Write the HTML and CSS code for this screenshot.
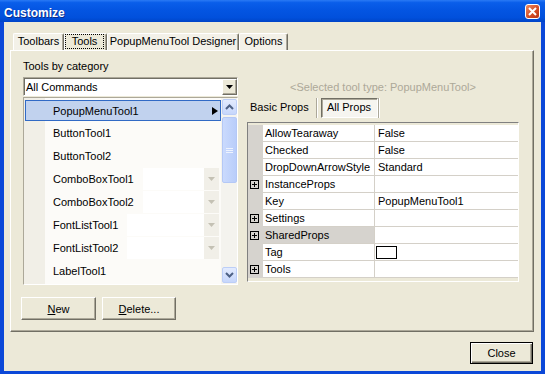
FILE: index.html
```html
<!DOCTYPE html>
<html>
<head>
    <title>Customize</title>
    <link rel="stylesheet" href="styles.css">
</head>
<body>
    <div class="window">
        <div class="titlebar">
            <span class="title">Customize</span>
            <span class="close-x">
                <svg width="9" height="9" viewBox="0 0 9 9"><path d="M1 1L8 8M8 1L1 8" stroke="#fff" stroke-width="2"/></svg>
            </span>
        </div>

        <div class="client">
            <div class="tabs">
                <div class="tab tab-toolbars">Toolbars</div>
                <div class="tab tab-tools active"><span class="focus">Tools</span></div>
                <div class="tab tab-designer">PopupMenuTool Designer</div>
                <div class="tab tab-options">Options</div>
            </div>

            <div class="panel">
                <!-- left: tool list -->
                <div class="left">
                    <div class="field-label">Tools by category</div>
                    <div class="combo">
                        <span class="combo-text">All Commands</span>
                        <span class="combo-btn">
                            <svg width="7" height="4" viewBox="0 0 7 4"><path d="M0 0H7L3.5 4Z" fill="#000"/></svg>
                        </span>
                    </div>

                    <div class="list">
                        <div class="list-items">
                            <div class="tool selected">
                                <span class="tool-name">PopupMenuTool1</span>
                                <svg class="submenu" width="6" height="8" viewBox="0 0 6 8"><path d="M0 0L6 4L0 8Z" fill="#000"/></svg>
                            </div>
                            <div class="tool"><span class="tool-name">ButtonTool1</span></div>
                            <div class="tool"><span class="tool-name">ButtonTool2</span></div>
                            <div class="tool">
                                <span class="tool-name">ComboBoxTool1</span>
                                <span class="tool-combo"><span class="tool-drop"><svg width="7" height="4" viewBox="0 0 7 4"><path d="M0 0H7L3.5 4Z" fill="#c4c1b4"/></svg></span></span>
                            </div>
                            <div class="tool">
                                <span class="tool-name">ComboBoxTool2</span>
                                <span class="tool-combo"><span class="tool-drop"><svg width="7" height="4" viewBox="0 0 7 4"><path d="M0 0H7L3.5 4Z" fill="#c4c1b4"/></svg></span></span>
                            </div>
                            <div class="tool">
                                <span class="tool-name">FontListTool1</span>
                                <span class="tool-combo"><span class="tool-drop"><svg width="7" height="4" viewBox="0 0 7 4"><path d="M0 0H7L3.5 4Z" fill="#c4c1b4"/></svg></span></span>
                            </div>
                            <div class="tool">
                                <span class="tool-name">FontListTool2</span>
                                <span class="tool-combo"><span class="tool-drop"><svg width="7" height="4" viewBox="0 0 7 4"><path d="M0 0H7L3.5 4Z" fill="#c4c1b4"/></svg></span></span>
                            </div>
                            <div class="tool"><span class="tool-name">LabelTool1</span></div>
                        </div>

                        <div class="scrollbar">
                            <div class="sb-btn">
                                <svg width="9" height="6" viewBox="0 0 9 6"><path d="M1 5L4.5 1.5L8 5" fill="none" stroke="#4d6185" stroke-width="2"/></svg>
                            </div>
                            <div class="sb-thumb">
                                <svg width="7" height="7" viewBox="0 0 7 7"><path d="M0 1.5H7M0 3.5H7M0 5.5H7" stroke="#eef3fe" stroke-width="1"/></svg>
                            </div>
                            <div class="sb-track"></div>
                            <div class="sb-btn">
                                <svg width="9" height="6" viewBox="0 0 9 6"><path d="M1 1L4.5 4.5L8 1" fill="none" stroke="#4d6185" stroke-width="2"/></svg>
                            </div>
                        </div>
                    </div>

                    <div class="actions">
                        <button class="btn btn-new"><u>N</u>ew</button>
                        <button class="btn btn-delete"><u>D</u>elete...</button>
                    </div>
                </div>

                <!-- right: property grid -->
                <div class="right">
                    <div class="selected-type">&lt;Selected tool type: PopupMenuTool&gt;</div>
                    <div class="prop-tabs">
                        <div class="ptab">Basic Props</div>
                        <div class="ptab-sep"></div>
                        <div class="ptab active">All Props</div>
                        <div class="ptab-sep light"></div>
                    </div>

                    <div class="grid">
                        <div class="prop-row">
                            <span class="gutter"></span>
                            <span class="prop-name">AllowTearaway</span>
                            <span class="prop-value">False</span>
                        </div>
                        <div class="prop-row">
                            <span class="gutter"></span>
                            <span class="prop-name">Checked</span>
                            <span class="prop-value">False</span>
                        </div>
                        <div class="prop-row">
                            <span class="gutter"></span>
                            <span class="prop-name">DropDownArrowStyle</span>
                            <span class="prop-value">Standard</span>
                        </div>
                        <div class="prop-row">
                            <span class="gutter"><svg class="expander" width="9" height="9" viewBox="0 0 9 9"><rect x=".5" y=".5" width="8" height="8" fill="none" stroke="#000"/><path d="M2 4.5H7M4.5 2V7" stroke="#000"/></svg></span>
                            <span class="prop-name">InstanceProps</span>
                            <span class="prop-value"></span>
                        </div>
                        <div class="prop-row">
                            <span class="gutter"></span>
                            <span class="prop-name">Key</span>
                            <span class="prop-value">PopupMenuTool1</span>
                        </div>
                        <div class="prop-row">
                            <span class="gutter"><svg class="expander" width="9" height="9" viewBox="0 0 9 9"><rect x=".5" y=".5" width="8" height="8" fill="none" stroke="#000"/><path d="M2 4.5H7M4.5 2V7" stroke="#000"/></svg></span>
                            <span class="prop-name">Settings</span>
                            <span class="prop-value"></span>
                        </div>
                        <div class="prop-row">
                            <span class="gutter"><svg class="expander" width="9" height="9" viewBox="0 0 9 9"><rect x=".5" y=".5" width="8" height="8" fill="none" stroke="#000"/><path d="M2 4.5H7M4.5 2V7" stroke="#000"/></svg></span>
                            <span class="prop-name highlighted">SharedProps</span>
                            <span class="prop-value"></span>
                        </div>
                        <div class="prop-row">
                            <span class="gutter"></span>
                            <span class="prop-name">Tag</span>
                            <span class="prop-value"><span class="tag-box"></span></span>
                        </div>
                        <div class="prop-row">
                            <span class="gutter"><svg class="expander" width="9" height="9" viewBox="0 0 9 9"><rect x=".5" y=".5" width="8" height="8" fill="none" stroke="#000"/><path d="M2 4.5H7M4.5 2V7" stroke="#000"/></svg></span>
                            <span class="prop-name">Tools</span>
                            <span class="prop-value"></span>
                        </div>
                    </div>
                </div>
            </div>

            <div class="footer">
                <button class="btn btn-close">Close</button>
            </div>
        </div>
    </div>
</body>
</html>
```

FILE: styles.css
```css
* {
    margin: 0;
    padding: 0;
    box-sizing: border-box;
}

body {
    font-family: 'Liberation Sans', Arial, sans-serif;
    font-size: 11px;
    color: #000;
    background: #fff;
    overflow: hidden;
}

.window {
    width: 545px;
    height: 374px;
    display: flex;
    flex-direction: column;
    background: #0b48d8;
}

/* title bar */
.titlebar {
    height: 22px;
    display: flex;
    align-items: center;
    justify-content: space-between;
    padding: 1px 5px 0 4px;
    background: linear-gradient(#2a7af5 0%, #0a5eea 12%, #0455e2 45%, #0150dc 80%, #0044c8 100%);
    color: #fff;
    font-weight: bold;
    font-size: 12px;
}

.title {
    padding-top: 2px;
    text-shadow: 1px 1px #0a2e8c;
}

.close-x {
    width: 15px;
    height: 15px;
    display: flex;
    align-items: center;
    justify-content: center;
    border: 1px solid #fff;
    border-radius: 3px;
    background: linear-gradient(135deg, #f08a60, #d24a22 60%, #b83415);
}

/* client area */
.client {
    flex: 1;
    margin: 0 4px 3px;
    background: #ece9d8;
    padding: 11px 7px 0 6px;
}

.tabs {
    display: flex;
    height: 17px;
    margin-left: 3px;
}

.tab {
    height: 17px;
    line-height: 15px;
    text-align: center;
    border: 1px solid #fff;
    border-bottom: none;
    border-right-color: #716f64;
    border-radius: 2px 2px 0 0;
    box-shadow: inset -1px 0 #aca899;
    background: #f3f1e8;
}

.tab-toolbars { width: 51px; }
.tab-tools { width: 43px; padding: 0 2px 0 0; }
.tab-designer { width: 132px; }
.tab-options { width: 49px; }

.tab.active {
    background: #ece9d8;
}

.focus {
    display: block;
    height: 15px;
    border: 1px dotted #000;
    line-height: 12px;
    margin-top: 0;
}

.panel {
    height: 282px;
    display: flex;
    gap: 9px;
    padding: 0 14px 0 12px;
    border: 1px solid;
    border-color: #fff #716f64 #716f64 #fff;
    box-shadow: inset -1px -1px #aca899;
}

/* left column */
.left {
    width: 215px;
    display: flex;
    flex-direction: column;
    padding-top: 9px;
}

.field-label {
    height: 13px;
    line-height: 13px;
}

.combo {
    margin-top: 4px;
    height: 19px;
    display: flex;
    align-items: center;
    background: #fff;
    border: 1px solid;
    border-color: #aca899 #fff #fff #aca899;
    box-shadow: inset 1px 1px #716f64;
    padding: 1px 0 0 2px;
}

.combo-text {
    flex: 1;
}

.combo-btn {
    width: 15px;
    height: 16px;
    margin-top: -1px;
    display: flex;
    align-items: center;
    justify-content: center;
    background: #ece9d8;
    border: 1px solid;
    border-color: #fff #716f64 #716f64 #fff;
    box-shadow: inset -1px -1px #aca899;
}

.list {
    margin-top: 1px;
    height: 188px;
    display: flex;
    border: 1px solid;
    border-color: #aca899 #fff #fff #aca899;
    box-shadow: inset 1px 1px #716f64;
    overflow: hidden;
}

.list-items {
    flex: 1;
    background: linear-gradient(to right, #f1efe7 21px, #fcfbf8 21px);
}

.tool {
    height: 23px;
    display: flex;
    align-items: center;
    padding: 0 2px 0 29px;
}

.tool.selected {
    height: 21px;
    margin: 2px 0 0 1px;
    padding-left: 27px;
    background: #c1d2ee;
    border: 1px solid #316ac5;
    margin-bottom: 0;
}

.tool.selected + .tool {
    margin-top: 0;
}

.submenu {
    margin-left: auto;
    margin-right: 0;
}

.tool-combo {
    flex: 1;
    align-self: stretch;
    margin: 1px 0 0 9px;
    display: flex;
    justify-content: flex-end;
    background: #fff;
}

.tool-drop {
    width: 15px;
    display: flex;
    align-items: center;
    justify-content: center;
    background: #f1efe8;
}

.scrollbar {
    width: 16px;
    display: flex;
    flex-direction: column;
    padding: 1px 0 1px 1px;
    background: #f4f3ee;
}

.sb-btn {
    height: 16px;
    display: flex;
    align-items: center;
    justify-content: center;
    border: 1px solid #bccef7;
    border-radius: 2px;
    background: linear-gradient(#e3ebfe, #c6d6fb);
}

.sb-thumb {
    height: 66px;
    margin-top: 2px;
    display: flex;
    align-items: center;
    justify-content: center;
    border: 1px solid #b4c8f6;
    border-radius: 2px;
    background: linear-gradient(to right, #cadafd, #b9cdfa);
}

.sb-track {
    flex: 1;
}

.actions {
    display: flex;
    gap: 6px;
    margin: 12px 0 0 -2px;
}

.btn {
    height: 23px;
    font-family: inherit;
    font-size: 11px;
    color: #000;
    background: #ece9d8;
    border: 1px solid;
    border-color: #fff #716f64 #716f64 #fff;
    box-shadow: inset -1px -1px #aca899;
    text-align: center;
}

.btn-new { width: 75px; }
.btn-delete { width: 74px; }

/* right column */
.right {
    width: 272px;
    display: flex;
    flex-direction: column;
    padding-top: 30px;
}

.selected-type {
    height: 13px;
    line-height: 13px;
    text-align: center;
    color: #aca899;
}

.prop-tabs {
    margin-top: 3px;
    height: 21px;
    display: flex;
}

.ptab {
    width: 66px;
    line-height: 20px;
    padding-left: 3px;
}

.ptab-sep {
    width: 2px;
    margin: 1px 3px 0;
    border-left: 1px solid #aca899;
    border-right: 1px solid #fff;
}

.ptab-sep.light {
    margin-left: 0;
}

.ptab.active {
    width: 57px;
    margin-top: 1px;
    padding-left: 5px;
    line-height: 17px;
    background: #f6f5f0;
    border: 1px solid;
    border-color: #716f64 #fff #fff #716f64;
    box-shadow: inset 1px 1px #aca899;
}

.grid {
    margin-top: 4px;
    height: 160px;
    padding-top: 2px;
    border: 1px solid;
    border-color: #808080 #fff #fff #808080;
    background: #ece9d8;
}

.prop-row {
    height: 17px;
    display: grid;
    grid-template-columns: 15px 112px 1fr;
}

.gutter {
    display: flex;
    align-items: center;
    padding-left: 2px;
    background: #d6d3ce;
}

.prop-name,
.prop-value {
    display: flex;
    align-items: center;
    background: #fff;
    border-bottom: 1px solid #d4d0c8;
}

.prop-name {
    padding-left: 2px;
    border-right: 1px solid #d4d0c8;
}

.prop-name.highlighted {
    background: #d6d3ce;
}

.prop-value {
    padding-left: 3px;
}

.tag-box {
    width: 21px;
    height: 13px;
    margin: 1px 0 0 -2px;
    border: 1px solid #000;
    background: #fff;
}

.footer {
    display: flex;
    justify-content: flex-end;
    padding: 10px 1px 0 0;
}

.btn-close {
    width: 63px;
    height: 22px;
    border: 1px solid #000;
    box-shadow: inset 1px 1px #fff, inset -1px -1px #716f64, inset -2px -2px #aca899;
}
```
